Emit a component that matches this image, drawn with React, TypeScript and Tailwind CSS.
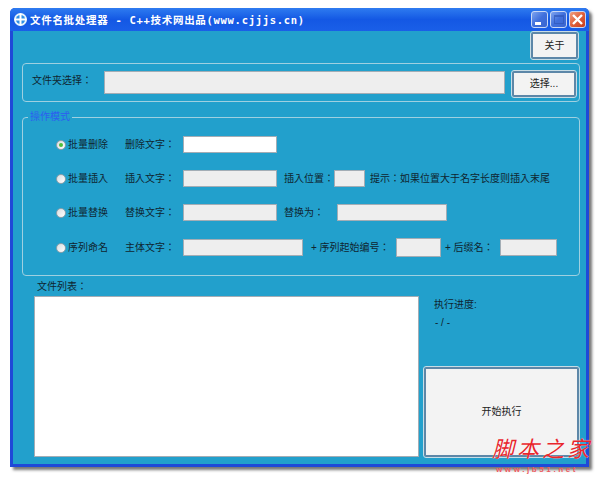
import React from 'react';

const cjk = { fontFamily: '"Liberation Sans", "Noto Sans CJK TC", sans-serif' };

function Field({ className = '', on = false }: { className?: string; on?: boolean }) {
  return (
    <div
      className={`h-[17px] shrink-0 border border-[#a3adb5] ${on ? 'bg-white' : 'bg-[#eeeeee]'} ${className}`}
    />
  );
}

function Radio({ label, checked = false }: { label: string; checked?: boolean }) {
  return (
    <div className="flex w-[69px] shrink-0 items-center">
      <span className="mr-[2px] flex h-[10px] w-[10px] items-center justify-center rounded-full border border-[#8fa0aa] bg-gradient-to-br from-[#d9dde0] to-white">
        {checked && <span className="h-[4px] w-[4px] rounded-full bg-[#4fbf3a]" />}
      </span>
      <span>{label}</span>
    </div>
  );
}

function RaisedButton({ label, className = '' }: { label: string; className?: string }) {
  return (
    <button
      className={`flex items-center justify-center rounded-[2px] border-2 border-[#5d87a8] bg-[#f3f3f3] text-[#222] outline outline-1 outline-[#c8dde6] ${className}`}
    >
      {label}
    </button>
  );
}

function CaptionButton({ kind }: { kind: 'min' | 'max' | 'close' }) {
  const bg =
    kind === 'close'
      ? 'from-[#f0a080] via-[#e0603a] to-[#c83c18]'
      : 'from-[#7fa4ee] via-[#3f6fdc] to-[#3a66d0]';
  return (
    <div className={`flex h-[17px] w-[17px] items-center justify-center rounded-[3px] border border-[#c8d8f4] bg-gradient-to-br ${bg}`}>
      {kind === 'min' && <span className="mt-[7px] mr-[3px] h-[3px] w-[6px] bg-white" />}
      {kind === 'max' && <span className="h-[9px] w-[10px] border border-[#2f57b8] border-t-2 opacity-70" />}
      {kind === 'close' && (
        <svg width="13" height="13" viewBox="0 0 13 13">
          <path d="M2 2 L11 11 M11 2 L2 11" stroke="#fff" strokeWidth="2.4" />
        </svg>
      )}
    </div>
  );
}

export default function App() {
  return (
    <div className="relative h-[478px] w-[600px] overflow-hidden bg-white pl-[10px] pt-[8px] text-[10px] leading-[12px] text-[#0f2530]" style={cjk}>
      <div className="flex h-[459px] w-[579px] flex-col rounded-t-[5px] bg-[#1f49d8] shadow-[3px_3px_3px_#777]">
        {/* title bar */}
        <div className="flex h-[23px] shrink-0 items-center rounded-t-[5px] bg-gradient-to-b from-[#2f7bf0] via-[#1458e4] to-[#1a5fe8] pl-[4px] pr-[3px]">
          <svg width="13" height="13" viewBox="0 0 13 13" className="shrink-0">
            <circle cx="6.5" cy="6.5" r="6.5" fill="#e8f4fc" />
            <circle cx="6.5" cy="6.5" r="4.6" fill="#2f8fe6" />
            <path d="M6.5 0.5 V12.5 M0.5 6.5 H12.5" stroke="#fff" strokeWidth="2" />
          </svg>
          <span className="ml-[3px] whitespace-nowrap font-bold tracking-[0.7px] text-white" style={{ fontFamily: '"DejaVu Sans Mono", "Noto Sans CJK SC", monospace', fontSize: '10.5px' }}>
            文件名批处理器 - C++技术网出品(www.cjjjs.cn)
          </span>
          <div className="ml-auto flex gap-[2px]">
            <CaptionButton kind="min" />
            <CaptionButton kind="max" />
            <CaptionButton kind="close" />
          </div>
        </div>

        {/* client area */}
        <div className="mx-[3px] mb-[3px] flex flex-1 flex-col bg-[#22a0cc] pt-[1px]">
          <div className="flex justify-end pr-[8px]">
            <RaisedButton label="关于" className="h-[27px] w-[47px]" />
          </div>

          <div className="ml-[9px] mt-[4px] flex h-[39px] w-[558px] items-center rounded-[4px] border border-[#9fd0e0]">
            <span className="mb-[3px] ml-[9px] w-[72px] shrink-0">文件夹选择：</span>
            <div className="mt-[2px] flex w-[472px] items-start">
              <div className="h-[23px] w-[401px] shrink-0 border border-[#a3adb5] bg-[#eeeeee]" />
              <RaisedButton label="选择..." className="ml-[7px] h-[26px] w-[64px] shrink-0" />
            </div>
          </div>

          <fieldset className="ml-[9px] mt-[9px] h-[165px] w-[558px] rounded-[4px] border border-[#9fd0e0]">
            <legend className="ml-[5px] px-[2px] leading-[12px] text-[#2d5cf0]">操作模式</legend>
            <div className="mt-[13px] flex flex-col gap-[17px] pl-[33px]">
              <div className="flex items-center">
                <Radio label="批量删除" checked />
                <span className="w-[58px] shrink-0">删除文字：</span>
                <Field on className="w-[94px]" />
              </div>
              <div className="flex items-center whitespace-nowrap">
                <Radio label="批量插入" />
                <span className="w-[58px] shrink-0">插入文字：</span>
                <Field className="w-[94px]" />
                <span className="ml-[7px] w-[50px] shrink-0">插入位置：</span>
                <Field className="w-[31px]" />
                <span className="ml-[5px]">提示：如果位置大于名字长度则插入末尾</span>
              </div>
              <div className="flex items-center whitespace-nowrap">
                <Radio label="批量替换" />
                <span className="w-[58px] shrink-0">替换文字：</span>
                <Field className="w-[94px]" />
                <span className="ml-[7px] w-[53px] shrink-0">替换为：</span>
                <Field className="w-[110px]" />
              </div>
              <div className="flex items-center whitespace-nowrap">
                <Radio label="序列命名" />
                <span className="w-[58px] shrink-0">主体文字：</span>
                <Field className="w-[120px]" />
                <span className="ml-[8px] w-[85px] shrink-0">+ 序列起始编号：</span>
                <Field className="h-[19px] w-[45px]" />
                <span className="ml-[4px] w-[55px] shrink-0">+ 后缀名：</span>
                <Field className="w-[57px]" />
              </div>
            </div>
          </fieldset>

          <div className="ml-[24px] mt-[5px] h-[12px]">文件列表：</div>
          <div className="mt-[3px] flex pl-[21px]">
            <div className="h-[161px] w-[385px] shrink-0 border border-[#a3adb5] bg-white" />
            <div className="ml-[5px] flex w-[155px] flex-col">
              <span className="ml-[10px] mt-[3px]">执行进度:</span>
              <span className="ml-[11px] mt-[6px]">- / -</span>
              <RaisedButton label="开始执行" className="mt-[38px] h-[90px] w-[155px]" />
            </div>
          </div>
        </div>
      </div>

      {/* site watermark */}
      <div className="absolute left-[492px] top-[437px] whitespace-nowrap text-[22px] italic leading-[26px] tracking-[3px] text-[#e8262c] [text-shadow:0_0_1px_#fff]">
        脚本之家
      </div>
      <div className="absolute left-[496px] top-[465px] whitespace-nowrap text-[8px] font-bold leading-[9px] tracking-[2.6px] text-[#ee5a60]">
        www.jb51.net
      </div>
    </div>
  );
}
